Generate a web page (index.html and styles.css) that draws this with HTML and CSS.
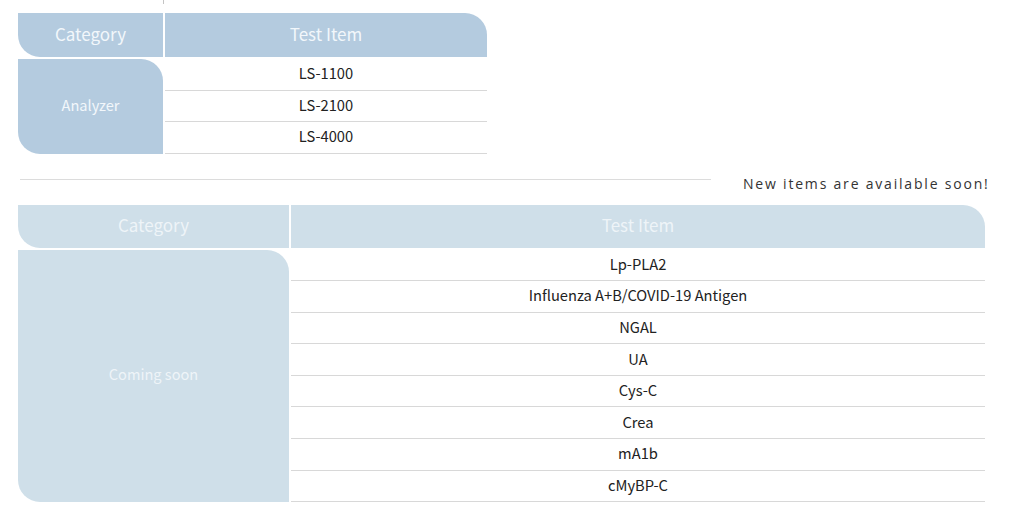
FILE: index.html
```html
<!DOCTYPE html>
<html>
<head>
<meta charset="utf-8">
<link rel="stylesheet" href="styles.css">
</head>
<body>
<div class="page">
  <div class="prev-row"></div>

  <div class="table t1">
    <div class="hcat">Category</div>
    <div class="hitem">Test Item</div>
    <div class="bcat">Analyzer</div>
    <div class="items">
      <div class="row">LS-1100</div>
      <div class="row">LS-2100</div>
      <div class="row">LS-4000</div>
    </div>
  </div>

  <div class="notice">
    <div class="rule"></div>
    <div class="note">New items are available soon!</div>
  </div>

  <div class="table t2">
    <div class="hcat">Category</div>
    <div class="hitem">Test Item</div>
    <div class="bcat">Coming soon</div>
    <div class="items">
      <div class="row">Lp-PLA2</div>
      <div class="row">Influenza A+B/COVID-19 Antigen</div>
      <div class="row">NGAL</div>
      <div class="row">UA</div>
      <div class="row">Cys-C</div>
      <div class="row">Crea</div>
      <div class="row">mA1b</div>
      <div class="row">cMyBP-C</div>
    </div>
  </div>
</div>
</body>
</html>
```

FILE: styles.css
```css
html, body {
  margin: 0;
  padding: 0;
  background: #ffffff;
}

body {
  font-family: "Noto Sans CJK SC", "Noto Sans", sans-serif;
  color: #222;
}

.page {
  width: 1014px;
  height: 511px;
  overflow: hidden;
}

.prev-row {
  margin-left: 163px;
  width: 323px;
  height: 4px;
  border-top: 1px solid #d9d9d9;
  border-left: 1px solid #c4c4c4;
  margin-top: -1px;
  margin-bottom: 9px;
}

.table {
  display: grid;
  column-gap: 2px;
  row-gap: 2px;
  margin-left: 18px;
}

.t1 {
  grid-template-columns: 145px 322px;
  grid-template-rows: 44px auto;
  --blue: #b4cbdf;
}

.t2 {
  grid-template-columns: 271px 694px;
  grid-template-rows: 43px auto;
  --blue: #cfdfe9;
}

.hcat, .hitem, .bcat {
  background: var(--blue);
  color: #f2f7fb;
  display: flex;
  align-items: center;
  justify-content: center;
  box-sizing: border-box;
}

.hcat, .hitem {
  font-size: 17px;
  padding-bottom: 4px;
}

.t2 .hcat, .t2 .hitem, .t2 .bcat {
  color: #eef4f8;
}

.hcat {
  border-bottom-left-radius: 22px;
}

.hitem {
  border-top-right-radius: 22px;
}

.bcat {
  font-size: 14.6px;
  padding-bottom: 4px;
  border-top-right-radius: 22px;
  border-bottom-left-radius: 22px;
}

.items {
  display: flex;
  flex-direction: column;
}

.row {
  border-bottom: 1px solid #d8d8d8;
  display: flex;
  align-items: center;
  justify-content: center;
  font-size: 14.7px;
  color: #222;
  box-sizing: content-box;
  padding-bottom: 0;
}

.t1 .row {
  height: 27.5px;
  padding-bottom: 3px;
}

.t2 .row {
  height: 27.6px;
  padding-bottom: 3px;
}

.notice {
  display: flex;
  align-items: flex-start;
  margin-top: 25px;
  margin-left: 20px;
  height: 26px;
}

.rule {
  width: 691px;
  height: 1px;
  background: #dcdcdc;
}

.note {
  margin-left: 32px;
  font-family: "Open Sans", "Noto Sans", sans-serif;
  font-size: 14px;
  letter-spacing: 1.8px;
  color: #333;
  line-height: 14px;
  margin-top: -2px;
}
```
